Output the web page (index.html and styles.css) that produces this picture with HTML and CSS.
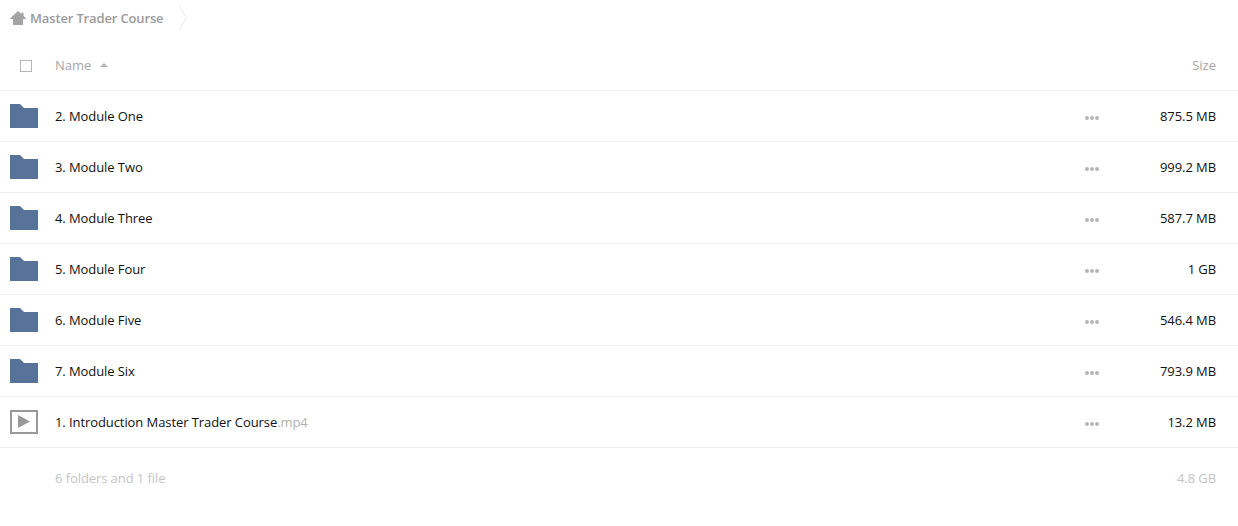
FILE: index.html
```html
<!DOCTYPE html>
<html lang="en">
<head>
<meta charset="utf-8">
<title>Master Trader Course</title>
<link rel="stylesheet" href="styles.css">
</head>
<body>
<nav class="crumbs">
  <svg class="home" width="16" height="14" viewBox="0 0 16 14"><path d="M8 0 L11.5 3 V1.5 H13.5 V4.8 L16 7.5 V8 H13 V14 H3 V8 H0 V7.5 Z" fill="#a3a3a3"/></svg>
  <span class="crumb-text">Master Trader Course</span>
  <svg class="chev" width="10" height="26" viewBox="0 0 10 26"><path d="M1 0.5 L8.5 12.5 L1 25" fill="none" stroke="#e8e8e8" stroke-width="1"/></svg>
</nav>
<div class="head">
  <span class="check"></span>
  <span class="name-head">Name<i class="sort"></i></span>
  <span class="size-head">Size</span>
</div>
<ul class="list">
  <li class="row"><svg class="folder" width="28" height="24" viewBox="0 0 28 24"><path d="M0 0 H10 L14 4 H28 V24 H0 Z" fill="#587399"/></svg><span class="name">2. Module One</span><span class="dots"><b></b><b></b><b></b></span><span class="size">875.5 MB</span></li>
  <li class="row"><svg class="folder" width="28" height="24" viewBox="0 0 28 24"><path d="M0 0 H10 L14 4 H28 V24 H0 Z" fill="#587399"/></svg><span class="name">3. Module Two</span><span class="dots"><b></b><b></b><b></b></span><span class="size">999.2 MB</span></li>
  <li class="row"><svg class="folder" width="28" height="24" viewBox="0 0 28 24"><path d="M0 0 H10 L14 4 H28 V24 H0 Z" fill="#587399"/></svg><span class="name">4. Module Three</span><span class="dots"><b></b><b></b><b></b></span><span class="size">587.7 MB</span></li>
  <li class="row"><svg class="folder" width="28" height="24" viewBox="0 0 28 24"><path d="M0 0 H10 L14 4 H28 V24 H0 Z" fill="#587399"/></svg><span class="name">5. Module Four</span><span class="dots"><b></b><b></b><b></b></span><span class="size">1 GB</span></li>
  <li class="row"><svg class="folder" width="28" height="24" viewBox="0 0 28 24"><path d="M0 0 H10 L14 4 H28 V24 H0 Z" fill="#587399"/></svg><span class="name">6. Module Five</span><span class="dots"><b></b><b></b><b></b></span><span class="size">546.4 MB</span></li>
  <li class="row"><svg class="folder" width="28" height="24" viewBox="0 0 28 24"><path d="M0 0 H10 L14 4 H28 V24 H0 Z" fill="#587399"/></svg><span class="name">7. Module Six</span><span class="dots"><b></b><b></b><b></b></span><span class="size">793.9 MB</span></li>
  <li class="row"><svg class="folder" width="28" height="24" viewBox="0 0 28 24"><rect x="1" y="1" width="26" height="22" fill="none" stroke="#999" stroke-width="2"/><path d="M8 5 V18 L20 11.5 Z" fill="#999"/></svg><span class="name">1. Introduction Master Trader Course<span class="ext">.mp4</span></span><span class="dots"><b></b><b></b><b></b></span><span class="size">13.2 MB</span></li>
</ul>
<div class="foot">
  <span>6 folders and 1 file</span>
  <span>4.8 GB</span>
</div>
</body>
</html>
```
FILE: styles.css
```css
* { box-sizing: border-box; }
html, body { margin: 0; padding: 0; }
body {
  background: #fff;
  font-family: "Open Sans", sans-serif;
  font-size: 13px;
  letter-spacing: -0.08px;
  color: #111;
  overflow: hidden;
}
.crumbs {
  display: flex;
  align-items: center;
  height: 36px;
  padding-left: 10px;
  font-weight: 600;
  letter-spacing: -0.15px;
  color: #9a9a9a;
}
.home { flex: none; margin-right: 4px; }
.crumb-text { font-size: 13px; }
.chev { margin-left: 15px; }
.head {
  display: flex;
  align-items: center;
  height: 55px;
  padding-right: 22px;
  padding-top: 4px;
  border-bottom: 1px solid #eee;
  letter-spacing: 0;
  color: #a5a5a5;
}
.check {
  width: 12px;
  height: 12px;
  margin-left: 20px;
  margin-top: 2px;
  border: 1px solid #b5b5b5;
  flex: none;
}
.name-head {
  margin-left: 23px;
  display: flex;
  align-items: center;
  flex: 1;
}
.sort {
  width: 0;
  height: 0;
  margin-left: 9px;
  border-left: 4px solid transparent;
  border-right: 4px solid transparent;
  border-bottom: 4px solid #b5b5b5;
}
.list { list-style: none; margin: 0; padding: 0; }
.row {
  display: flex;
  align-items: center;
  height: 51px;
  padding: 0 22px 0 10px;
  border-bottom: 1px solid #eee;
}
.folder { flex: none; }
.name { margin-left: 17px; flex: 1; }
.ext { color: #b0b0b0; }
.dots { display: flex; gap: 1px; margin-top: 3px; }
.dots b {
  width: 4px;
  height: 4px;
  border-radius: 50%;
  background: #b5b5b5;
}
.size { width: 117px; text-align: right; }
.foot {
  display: flex;
  justify-content: space-between;
  height: 60px;
  padding: 21px 22px 0 55px;
  color: #c4c4c4;
}
```
